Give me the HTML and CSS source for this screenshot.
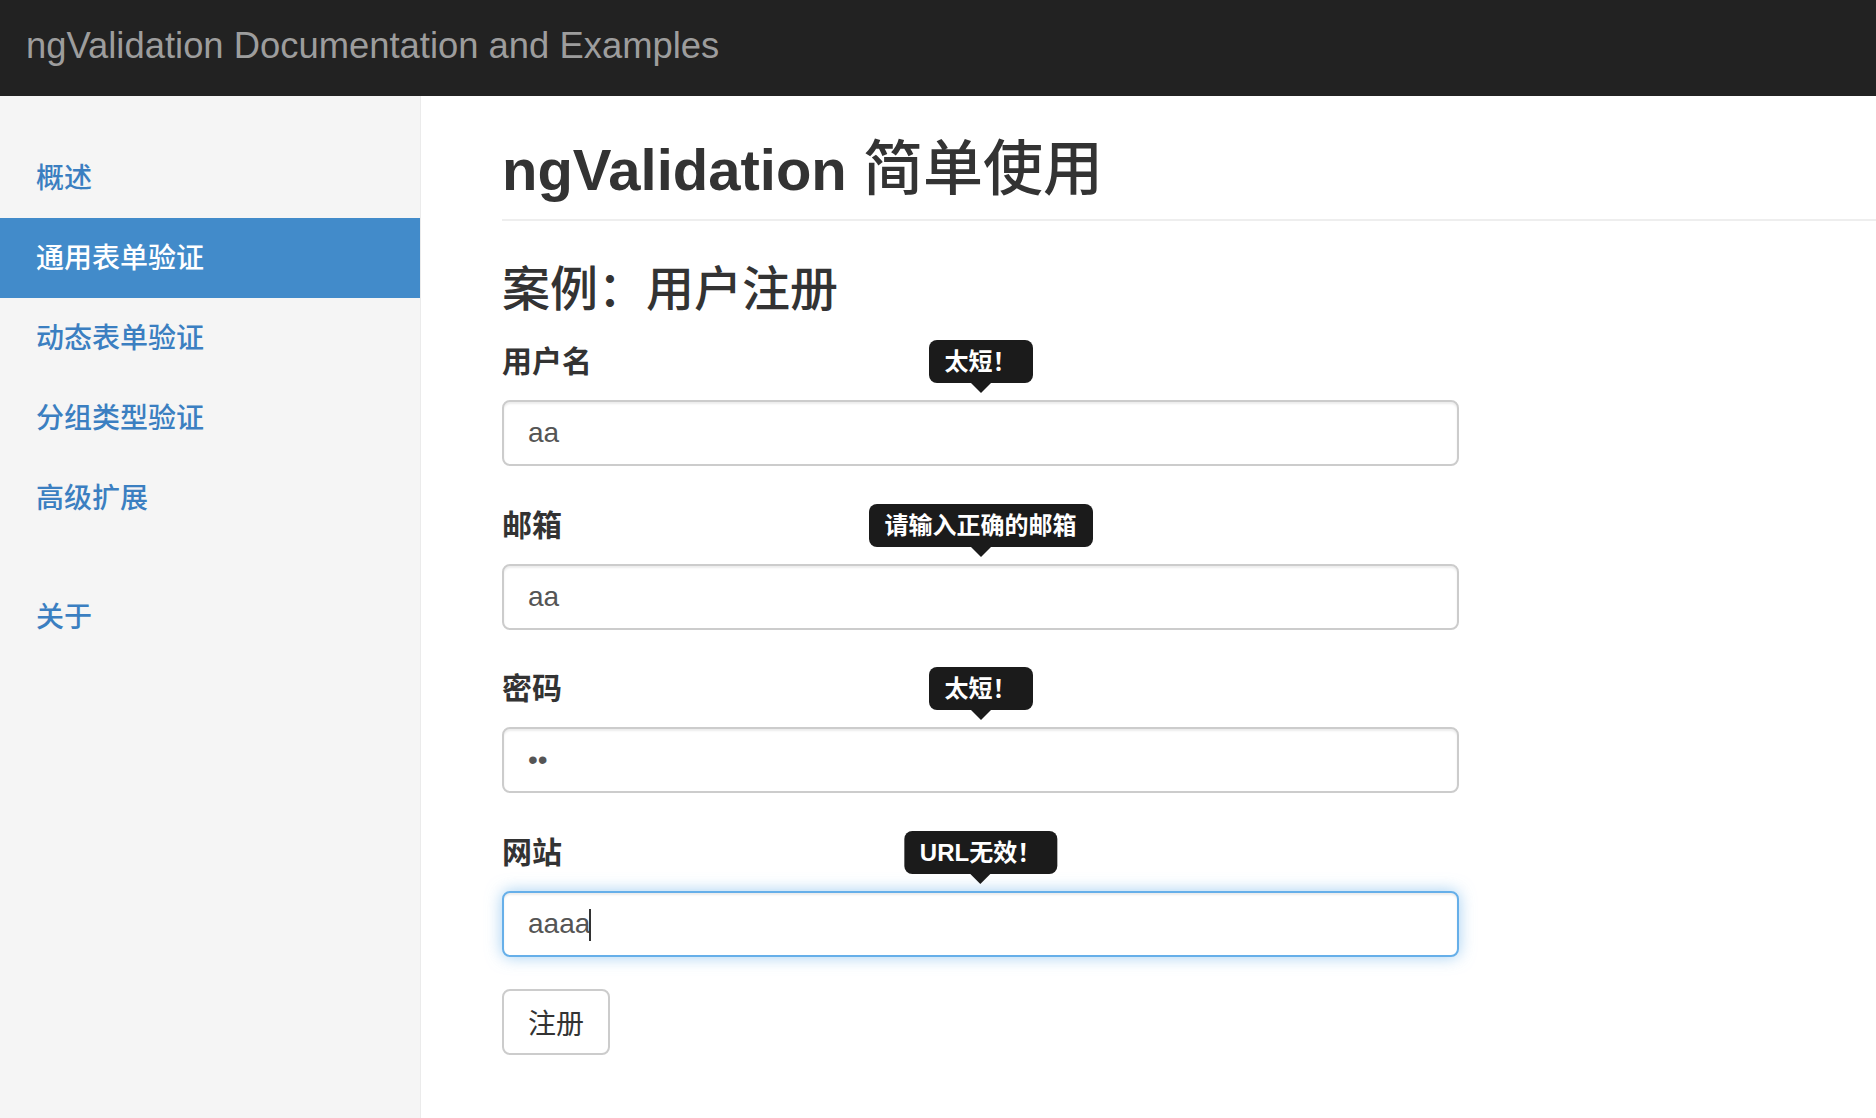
FILE: index.html
```html
<!DOCTYPE html>
<html lang="zh-CN">
<head>
<meta charset="utf-8">
<title>ngValidation Documentation and Examples</title>
<link rel="stylesheet" href="styles.css">
</head>
<body>
<header class="navbar">
  <a class="brand" href="#">ngValidation Documentation and Examples</a>
</header>
<div class="layout">
  <aside class="sidebar">
    <ul class="nav">
      <li class="nav-item"><a href="#">概述</a></li>
      <li class="nav-item active"><a href="#">通用表单验证</a></li>
      <li class="nav-item"><a href="#">动态表单验证</a></li>
      <li class="nav-item"><a href="#">分组类型验证</a></li>
      <li class="nav-item"><a href="#">高级扩展</a></li>
      <li class="nav-item nav-sep"><a href="#">关于</a></li>
    </ul>
  </aside>
  <main class="content">
    <h1 class="page-title">ngValidation <span class="cjk-title">简单使用</span></h1>
    <h3 class="section-title">案例：用户注册</h3>
    <form class="form">
      <div class="form-group">
        <label class="form-label">用户名</label>
        <div class="field">
          <input class="form-control" type="text" value="aa">
          <div class="tooltip">太短！</div>
        </div>
      </div>
      <div class="form-group">
        <label class="form-label">邮箱</label>
        <div class="field">
          <input class="form-control" type="text" value="aa">
          <div class="tooltip">请输入正确的邮箱</div>
        </div>
      </div>
      <div class="form-group">
        <label class="form-label">密码</label>
        <div class="field">
          <input class="form-control" type="password" value="aa">
          <div class="tooltip">太短！</div>
        </div>
      </div>
      <div class="form-group form-group-last">
        <label class="form-label">网站</label>
        <div class="field">
          <input class="form-control focused" type="text" value="aaaa">
          <span class="caret"></span>
          <div class="tooltip">URL无效！</div>
        </div>
      </div>
      <button class="btn" type="button">注册</button>
    </form>
  </main>
</div>
</body>
</html>
```

FILE: styles.css
```css
* { box-sizing: border-box; }

html, body {
  margin: 0;
  padding: 0;
  background: #fff;
  color: #333;
  font-family: "Liberation Sans", "Noto Sans CJK SC", sans-serif;
}

.navbar {
  height: 96px;
  background: #222;
  padding-left: 26px;
}

.brand {
  display: block;
  font-family: "Liberation Sans", sans-serif;
  font-size: 36.4px;
  line-height: 92px;
  color: #9d9d9d;
  text-decoration: none;
}

.layout {
  display: flex;
  min-height: calc(100vh - 96px);
}

.sidebar {
  width: 421px;
  flex: 0 0 421px;
  background: #f5f5f5;
  border-right: 1px solid #ebebeb;
}

.nav {
  list-style: none;
  margin: 0;
  padding: 42px 0 0;
}

.nav-item a {
  display: block;
  height: 80px;
  line-height: 76px;
  padding: 0 0 4px 36px;
  font-family: "Noto Sans CJK SC", sans-serif;
  font-size: 28px;
  font-weight: 500;
  color: #3b7fc1;
  text-decoration: none;
}

.nav-item.active a {
  background: #428bca;
  color: #fff;
}

.nav-sep {
  margin-top: 39px;
}

.content {
  flex: 1;
  padding-left: 81px;
}

.page-title {
  margin: 36px 0 0;
  padding-bottom: 17px;
  border-bottom: 2px solid #eee;
  font-family: "Liberation Sans", "Noto Sans CJK SC", sans-serif;
  font-size: 58px;
  line-height: 64px;
  font-weight: 700;
  color: #333;
}

.cjk-title {
  font-family: "Noto Sans CJK SC", sans-serif;
  font-size: 60px;
  font-weight: 500;
}

.section-title {
  margin: 38px 0 28px;
  font-family: "Noto Sans CJK SC", sans-serif;
  font-size: 48px;
  line-height: 52px;
  font-weight: 500;
  color: #333;
}

.form {
  margin: 0;
}

.form-group {
  margin-bottom: 36.5px;
}

.form-group-last {
  margin-bottom: 32px;
}

.form-label {
  display: block;
  margin-bottom: 21px;
  font-family: "Noto Sans CJK SC", sans-serif;
  font-size: 30px;
  line-height: 40px;
  font-weight: 700;
  color: #333;
}

.field {
  position: relative;
  width: 957px;
}

.form-control {
  display: block;
  width: 100%;
  height: 66px;
  margin: 0;
  padding: 0 24px;
  border: 2px solid #ccc;
  border-radius: 8px;
  background: #fff;
  font-family: "Liberation Sans", sans-serif;
  font-size: 28px;
  color: #555;
  box-shadow: inset 0 2px 2px rgba(0, 0, 0, 0.075);
  outline: none;
}

.form-control.focused {
  border-color: #66afe9;
  box-shadow: inset 0 2px 2px rgba(0, 0, 0, 0.075), 0 0 16px rgba(102, 175, 233, 0.6);
}

.caret {
  position: absolute;
  left: 87px;
  top: 18px;
  width: 2px;
  height: 32px;
  background: #333;
}

.tooltip {
  position: absolute;
  left: 50%;
  bottom: calc(100% + 17px);
  transform: translateX(-50%);
  padding: 6px 16px;
  border-radius: 8px;
  background: #1b1b1b;
  color: #fff;
  font-family: "Liberation Sans", "Noto Sans CJK SC", sans-serif;
  font-size: 24px;
  line-height: 31px;
  font-weight: 700;
  white-space: nowrap;
}

.tooltip::after {
  content: "";
  position: absolute;
  left: 50%;
  top: 100%;
  margin-left: -10px;
  border-style: solid;
  border-width: 10px 10px 0;
  border-color: #1b1b1b transparent transparent;
}

.btn {
  display: block;
  height: 66px;
  margin: 0;
  padding: 0 24px;
  border: 2px solid #ccc;
  border-radius: 8px;
  background: #fff;
  font-family: "Noto Sans CJK SC", sans-serif;
  font-size: 28px;
  color: #333;
  cursor: pointer;
}
```
